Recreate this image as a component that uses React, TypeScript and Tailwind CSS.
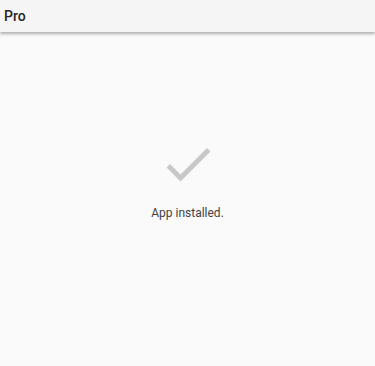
export default function App() {
  return (
    <div className="flex h-[366px] w-[375px] flex-col bg-[#fafafa] font-['Roboto',sans-serif]">
      {/* Barra superior */}
      <header className="z-10 flex h-8 items-center bg-[#f5f5f5] px-1 shadow-[0_2px_3px_rgba(0,0,0,0.3)]">
        <span className="text-[14px] font-medium text-[#262626]">Pro</span>
      </header>

      <main className="flex flex-1 flex-col items-center pt-[102px]">
        <svg width="60" height="60" viewBox="0 0 24 24" className="text-[#c8c8c8]">
          <path fill="currentColor" d="M9 16.17L4.83 12l-1.42 1.41L9 19 21 7l-1.41-1.41z" />
        </svg>
        <p className="mt-[11px] text-[12px] leading-4 text-[#424242]">App installed.</p>
      </main>
    </div>
  );
}
